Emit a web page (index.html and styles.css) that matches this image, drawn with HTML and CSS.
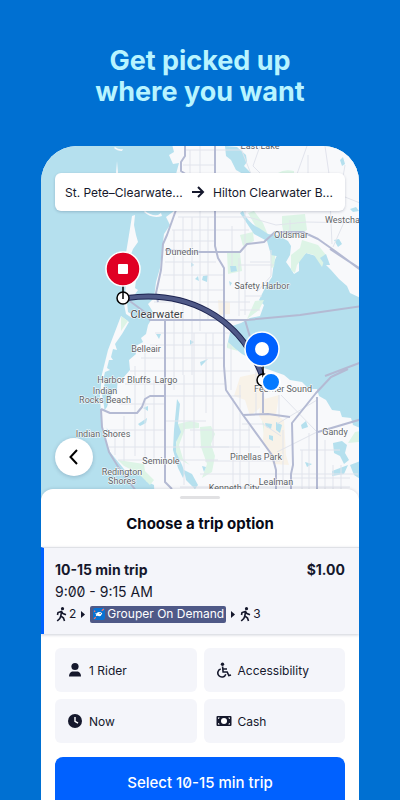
FILE: index.html
```html
<!DOCTYPE html>
<html lang="en">
<head>
    <meta charset="UTF-8">
    <meta name="viewport" content="width=device-width, initial-scale=1.0">
    <title>Choose a trip option</title>
    <link rel="stylesheet" href="styles.css">
</head>
<body>
    <h1 class="headline">Get picked up<br>where you want</h1>

    <main class="phone">
        <section class="map">
            <svg class="map-canvas" viewBox="41 146 318 354" preserveAspectRatio="xMidYMid slice">
                <rect class="water" x="0" y="100" width="420" height="420"/>

                <!-- Mainland -->
                <path class="land" d="M171 140 L174 152 L169 155 L173 164 L179 163 L176 174 L178 190 L174 211 L166 217 L170 225 L164 234 L162 250 L160 268 L156 282 L154 298 L148 304 L153 312 L151 320 L148 325 L146 334 L141 338 L143 342 L134 347 L136 354 L129 360 L130 370 L123 378 L118 377 L117 389 L110 397 L107 407 L104 411 L104 425 L110 432 L111 447 L117 460 L128 467 L137 468 L140 474 L148 475 L146 481 L154 485 L155 505 L365 505 L365 430 L353 425 L351 418 L342 417 L340 411 L332 410 L326 400 L319 396 L317 389 L309 389 L302 382 L290 380 L284 375 L270 370 L258 366 L250 358 L242 354 L237 350 L227 347 L229 337 L232 326 L241 323 L250 318 L260 316 L264 305 L259 300 L266 286 L272 277 L274 262 L278 253 L270 246 L270 240 L277 235 L288 241 L291 246 L290 255 L286 262 L291 269 L294 274 L299 271 L299 261 L306 253 L316 256 L323 262 L331 270 L339 279 L347 286 L350 293 L365 300 L365 140 Z"/>

                <!-- Barrier islands -->
                <path class="land" d="M115 147 q4 3 8 2 l-1 2 q-5 0 -8 -3z M117 161 l-1 12 1 14 1 -14z M145 211 q6 5 13 4 l3 -2 1 3 q-10 3 -18 -4z M132 216 l3 -1 -1 10 2 10 2 7 -5 7 -3 8 -7 6 3 -10 2 -12z M127 274 l7 0 2 6 -1 8 3 2 -7 10 -4 2 1 10 5 3 -1 3 -6 -4 -2 -10z M121 316 l8 6 -7 12 -7 10 2 6 -4 -1 -2 8 2 3 -4 0 -2 8 3 2 -5 2 -2 8 2 2 -3 12 2 12 3 24 8 18 15 20 -2 6 -18 -22 -8 -20 -2 -36 2 -22 6 -24z"/>
                <path class="park" d="M121 316 l7 5 -7 10z M278 173 q6 -4 16 -2 l0 4 -16 0z M248 213 l6 -2 9 12 5 12 10 6 -10 -1 -12 -13z M282 216 l23 -2 2 16 -13 8 -10 -3 -2 -10z M240 235 l13 -3 1 9 -11 5z M302 240 l16 5 8 10 -4 12 -8 -12 -8 -2 -9 12 -2 8 -4 -3 0 -15 9 -7z M270 246 l6 4 -2 17 -3 1z M227 253 l13 0 2 18 -14 3z M255 301 l9 -1 -5 10 -12 9z M228 342 l10 9 -11 -3z M178 424 l12 -3 9 2 0 5 -14 1 -6 16 4 14 7 6 -15 -8z M262 420 l16 -3 6 6 -1 13 -9 4 -10 -6z M355 432 l5 -1 0 11 -12 1z M118 460 l26 4 1 7 9 9 -4 5 -12 -12 -14 -7z M200 427 l11 -1 4 8 -4 10 4 12 -3 16 -10 6 5 -14 -6 -17z"/>
                <path class="sand" d="M218 300 l12 2 0 12 -11 1z M240 377 l18 -4 8 30 -16 13 -5 -16 -11 -4z M261 400 l18 -5 -3 20 8 5 2 35 3 10 -16 -1 -10 -24 1 -16 -5 -8z M168 310 l15 2 0 8 -15 0z"/>

                <!-- Lakes and inlets -->
                <path class="water" d="M225 146 l12 1 9 8 1 7 -3 4 8 8 -2 4 -14 -8 -5 -10 -5 -4z M243 211 q5 12 16 17 l9 6 12 2 9 8 -2 14 -16 -3 -4 -14 -13 -7 -14 -21z M230 266 l6 0 1 5 -6 1z M203 276 l5 -1 -1 7 -5 -2z M340 160 l3 -3 2 7 -3 2z M350 209 l6 -2 3 4 -6 1z M334 240 l5 -1 3 5 -4 3z M320 258 l6 -4 4 11 -5 0z M177 399 l3 5 -2 20 3 8 -5 10 0 10 6 13 3 8 -2 5 -5 -10 -5 -18 1 -20z M138 424 l9 -6 -1 5 -6 3z M143 408 l5 -2 0 5z M301 425 l5 -4 2 6 -6 2z M333 443 l9 -2 5 4 -2 8 4 7 -5 4 -4 -8 -6 -3z M350 465 l10 -4 0 18 -6 -4z M332 471 l16 -6 -4 9 -12 2z M305 462 l7 2 -5 3z M120 468 l10 8 6 0 3 8 9 8 -16 3z M184 470 l8 4 6 11 -3 4 -9 -9z M265 423 l7 1 -1 5 -5 -2z M276 422 l6 3 -2 8 -4 -3z M269 435 l4 1 0 5 -4 -2z M229 281 l3 2 -2 3z M191 262 l3 3 -3 2z M195 279 l3 -3 1 5z M156 334 l5 0 -2 5z M190 340 l4 2 -4 3z M200 362 l8 -3 -7 7z M202 466 l4 1 -2 5z M343 405 l5 6 -6 -2z"/>

                <!-- Streets -->
                <path class="street" d="M186 150 h55 M183 165 h32 M190 180 h60 M172 230 h77 M178 217 h70 M170 241 h46 M165 262 h51 M163 275 h60 M160 290 h64 M154 302 h96 M155 333 h75 M150 345 h74 M141 358 h83 M130 371 h120 M125 384 h100 M119 404 h46 M106 430 h59 M109 447 h120 M118 460 h100 M165 396 h76 M166 421 h40 M190 430 h60 M200 447 h60 M205 461 h75 M200 474 h158 M180 487 h170 M242 424 h22 M290 478 h60 M300 450 h40 M238 265 h36 M245 296 h17 M240 310 h20
                M190 150 v30 M200 146 v185 M208 217 v103 M192 217 v158 M183 217 v158 M174 230 v160 M206 333 v80 M213 333 v115 M194 333 v115 M184 375 v110 M245 175 v140 M232 226 v40 M239 258 v58 M154 380 v85 M145 345 v115 M135 366 v90 M124 416 v45 M115 430 v25 M231 345 v45 M233 398 v91 M240 385 v104 M249 425 v63 M256 365 v50 M283 430 v58 M302 450 v40 M309 433 v57 M325 440 v50 M333 465 v25 M341 465 v25 M279 395 v23
                M240 146 l11 28 M260 146 l-7 20 8 8 M308 155 v18 M325 146 l4 28 M345 165 l-5 30 20 8 M248 217 l28 8 30 -3 54 1 M307 146 l-10 28 M290 220 v15 M330 200 l2 44 M345 220 l-12 27 M277 424 l40 -24 M277 452 l40 -20 M281 395 l36 37 M263 424 l18 12 M271 250 v26 l-14 16 M250 262 h20"/>
                <path class="road" d="M185 140 L185 156 L181 162 L181 171 L187 175 M176 210 L167 235 L163 244 L161 270 L156 293 L158 302 M127 299 L146 313 L150 320 L247 320 L300 315 L362 306 M165 320 V482 L172 489 M215 146 V246 L218 258 L224 268 V366 L226 390 L243 415 L272 455 L276 470 V495 M165 250 L200 252 H240 L247 244 L264 242 L275 232 L303 232 L318 239 L335 251 L362 271 M330 249 L362 270 M101 409 L110 413 H137 L142 407 L145 399 L150 396 H165 M101 409 L102 427 L109 452 L122 473 L137 492 M243 415 L268 414 L290 417 M291 495 V474 L293 465 L292 423 L316 393 L331 377 L348 369 M317 397 V495 M318 432 L362 419 M245 320 l5 17 M263 380 v33 M325 376 L362 362"/>

                <!-- Place names -->
                <g class="places">
                    <text x="260" y="149">East Lake</text>
                    <text x="182" y="255">Dunedin</text>
                    <text x="291" y="238">Oldsmar</text>
                    <text x="325" y="223" class="start">Westchase</text>
                    <text x="262" y="289">Safety Harbor</text>
                    <text x="157" y="318" class="city">Clearwater</text>
                    <text x="146" y="352">Belleair</text>
                    <text x="124" y="383">Harbor Bluffs</text>
                    <text x="166" y="383">Largo</text>
                    <text x="105" y="394">Indian</text>
                    <text x="105" y="403">Rocks Beach</text>
                    <text x="103" y="437">Indian Shores</text>
                    <text x="161" y="464">Seminole</text>
                    <text x="122" y="475">Redington</text>
                    <text x="122" y="484">Shores</text>
                    <text x="283" y="392">Feather Sound</text>
                    <text x="335" y="435">Gandy</text>
                    <text x="256" y="460">Pinellas Park</text>
                    <text x="276" y="485">Lealman</text>
                    <text x="234" y="491">Kenneth City</text>
                </g>

                <!-- Route -->
                <path class="route-edge" d="M127 298 C185 290 240 315 263 378"/>
                <path class="route" d="M127 298 C185 290 240 315 263 378"/>
                <circle class="stop" cx="123" cy="298" r="6"/>
                <path class="stem" d="M123 284 V299"/>
                <circle class="pin pin-end" cx="123" cy="269" r="17"/>
                <rect x="118" y="264" width="10" height="10" rx="1" fill="#fff"/>
                <circle class="stop" cx="263" cy="380" r="6"/>
                <path class="stem" d="M263 364 V380"/>
                <circle class="pin pin-start" cx="262" cy="349" r="17"/>
                <circle cx="262" cy="349" r="7" fill="#fff"/>
                <circle class="me" cx="271" cy="382" r="9"/>
            </svg>

            <button class="search" type="button">
                <span>St. Pete–Clearwate...</span>
                <svg width="14" height="12" viewBox="0 0 14 12"><path d="M1 6H12M7 1L12 6L7 11" fill="none" stroke="#15182c" stroke-width="2"/></svg>
                <span>Hilton Clearwater B...</span>
            </button>

            <button class="back" type="button" aria-label="Back">
                <svg width="10" height="16" viewBox="0 0 10 16"><path d="M8 1L1.500 8L8 15" fill="none" stroke="#000" stroke-width="2"/></svg>
            </button>
        </section>

        <section class="sheet">
            <div class="handle"></div>
            <h2 class="sheet-title">Choose a trip option</h2>

            <button class="trip" type="button">
                <span class="trip-row">
                    <span>10-15 min trip</span>
                    <span>$1.00</span>
                </span>
                <span class="trip-time">9:00 - 9:15 AM</span>
                <span class="trip-legs">
                    <svg class="walk" width="11" height="15" viewBox="0 0 11 15"><circle cx="6.5" cy="1.7" r="1.6"/><path d="M5.500 5L4.800 9L7.500 11L8.500 14M4.800 9L3.800 11.500L1.200 14M1.500 8L2 5.600L5.500 4.500L7 6.600L10 7.800"/></svg>
                    <span>2</span>
                    <svg class="caret" width="4" height="7" viewBox="0 0 4 7"><path d="M0 0L4 3.500L0 7Z"/></svg>
                    <span class="badge">
                        <svg width="12" height="12" viewBox="0 0 11 11"><rect width="11" height="11" rx="2" fill="#0872d3"/><path d="M1.500 5L3 5Q6 2.500 8.500 5Q7 8.500 4 7L2.500 7.500L3 6Z" fill="#fff"/><circle cx="6.500" cy="5" r="0.600" fill="#173f78"/><path d="M8 2.500L10 1M1 10L2.500 8.500M1 2.500L2 3.500" stroke="#ff735f" stroke-width="1.200"/></svg>
                        Grouper On Demand
                    </span>
                    <svg class="caret" width="4" height="7" viewBox="0 0 4 7"><path d="M0 0L4 3.500L0 7Z"/></svg>
                    <svg class="walk" width="11" height="15" viewBox="0 0 11 15"><circle cx="6.5" cy="1.7" r="1.6"/><path d="M5.500 5L4.800 9L7.500 11L8.500 14M4.800 9L3.800 11.500L1.200 14M1.500 8L2 5.600L5.500 4.500L7 6.600L10 7.800"/></svg>
                    <span>3</span>
                </span>
            </button>

            <div class="options">
                <button class="option" type="button">
                    <svg width="16" height="16" viewBox="0 0 16 16"><circle cx="8" cy="4.5" r="3.6"/><path d="M2 14.6C2 11 4 9.400 6 9.400H10C12 9.400 14 11 14 14.600Z"/></svg>
                    1 Rider
                </button>
                <button class="option" type="button">
                    <svg width="16" height="16" viewBox="0 0 16 16"><circle cx="6.5" cy="2.3" r="1.7"/><path d="M6.600 4.500L7.100 10H11.200L12.800 13.600L15 12.900M6.800 7H11M4.700 7A4.100 4.100 0 1 0 9.800 12.200" fill="none" stroke="#15182c" stroke-width="1.6"/></svg>
                    Accessibility
                </button>
                <button class="option" type="button">
                    <svg width="16" height="16" viewBox="0 0 16 16"><circle cx="8" cy="8" r="7"/><path d="M8 4V8.300L11 10.200" fill="none" stroke="#fff" stroke-width="1.4"/></svg>
                    Now
                </button>
                <button class="option" type="button">
                    <svg width="16" height="16" viewBox="0 0 16 16"><rect x="0.5" y="3" width="15" height="10" rx="1"/><circle cx="8" cy="8" r="3" fill="#fff"/><path d="M2 6V4.500H3.700Q3.500 5.800 2 6ZM14 6V4.500H12.300Q12.500 5.800 14 6ZM2 10V11.500H3.700Q3.500 10.200 2 10ZM14 10V11.500H12.300Q12.500 10.200 14 10Z" fill="#fff"/></svg>
                    Cash
                </button>
            </div>

            <button class="select" type="button">Select 10-15 min trip</button>
        </section>
    </main>
</body>
</html>
```
FILE: styles.css
```css
* {
    box-sizing: border-box;
}

body {
    margin: 0;
    height: 100vh;
    overflow: hidden;
    background-color: #0070d2;
    color: #15182c;
    font-family: Inter, sans-serif;
}

button {
    border: none;
    font: inherit;
    color: inherit;
    cursor: pointer;
}

svg {
    flex-shrink: 0;
}

.headline {
    margin: 0;
    padding: 45px 0 39px;
    text-align: center;
    font-size: 27px;
    line-height: 31px;
    font-weight: 700;
    color: #b8f4ff;
}

.phone {
    margin: 0 41px;
    border-radius: 36px 36px 0 0;
    overflow: hidden;
    background-color: #fff;
}

/* Map */
.map {
    position: relative;
    display: flex;
    flex-direction: column;
    justify-content: space-between;
    align-items: flex-start;
    height: 354px;
    padding: 27px 14px 24px;
}

.map-canvas {
    position: absolute;
    inset: 0;
    width: 100%;
    height: 100%;
}

.water {
    fill: #b5e0ee;
}

.land {
    fill: #f8f9fb;
}

.park {
    fill: #ddf4e6;
}

.sand {
    fill: #f8f2e8;
}

.street {
    fill: none;
    stroke: #e1e4ec;
    stroke-width: 1;
}

.road {
    fill: none;
    stroke: #b4bad3;
    stroke-width: 2;
    stroke-linejoin: round;
}

.places {
    font-family: Roboto, sans-serif;
    font-size: 9px;
    text-anchor: middle;
    fill: #5c5f66;
    stroke: #fff;
    stroke-width: 1;
    paint-order: stroke;
}

.places .start {
    text-anchor: start;
}

.places .city {
    font-size: 11px;
    fill: #3b3e45;
}

.route-edge {
    fill: none;
    stroke: #1c2350;
    stroke-width: 6;
}

.route {
    fill: none;
    stroke: #4f5987;
    stroke-width: 4;
}

.stop {
    fill: #fff;
    stroke: #000;
    stroke-width: 1.5;
}

.stem {
    stroke: #000;
    stroke-width: 1.5;
}

.pin {
    stroke: #fff;
    stroke-width: 1.5;
}

.pin-end {
    fill: #e00024;
}

.pin-start {
    fill: #0061ff;
}

.me {
    fill: #057aff;
    stroke: #fff;
    stroke-width: 2;
}

.search {
    position: relative;
    display: flex;
    justify-content: space-between;
    align-items: center;
    width: 100%;
    height: 38px;
    padding: 0 12px 0 10px;
    border-radius: 6px;
    background-color: #fff;
    box-shadow: 0 1px 3px rgba(0, 20, 60, 0.2);
    font-size: 12px;
    white-space: nowrap;
}

.back {
    position: relative;
    display: flex;
    justify-content: center;
    align-items: center;
    width: 38px;
    height: 38px;
    padding: 0;
    border-radius: 50%;
    background-color: #fff;
    box-shadow: 0 1px 4px rgba(0, 20, 60, 0.2);
}

/* Bottom sheet */
.sheet {
    position: relative;
    margin-top: -11px;
    padding-top: 7px;
    border-radius: 12px 12px 0 0;
    background-color: #fff;
    box-shadow: 0 -1px 3px rgba(0, 20, 60, 0.1);
}

.handle {
    width: 40px;
    height: 3px;
    margin: 0 auto;
    border-radius: 2px;
    background-color: #e1e1e3;
}

.sheet-title {
    margin: 0;
    padding: 15px 0 13px;
    text-align: center;
    font-size: 15px;
    line-height: 20px;
    font-weight: 700;
    color: #080a18;
}

.trip {
    display: flex;
    flex-direction: column;
    gap: 2px;
    width: 100%;
    padding: 12px 14px 10px 11px;
    border-top: 1px solid #dfe1e6;
    border-left: 3px solid #0061ff;
    background-color: #f4f5fa;
    box-shadow: 0 1px 3px rgba(0, 20, 60, 0.2);
    text-align: left;
    font-size: 14px;
    line-height: 20px;
}

.trip-row {
    display: flex;
    justify-content: space-between;
    width: 100%;
    font-weight: 700;
}

.trip-time {
    font-feature-settings: "zero";
}

.trip-legs {
    display: flex;
    align-items: center;
    gap: 4px;
    padding-left: 1px;
    font-size: 12px;
}

.walk {
    fill: none;
    stroke: #15182c;
    stroke-width: 1.6;
}

.walk circle {
    fill: #15182c;
    stroke: none;
}

.walk + span {
    margin-left: -2px;
}

.caret {
    margin: 0 1px;
    fill: #15182c;
}

.badge {
    display: flex;
    align-items: center;
    gap: 2px;
    height: 17px;
    padding: 0 2px 0 3px;
    border-radius: 2px;
    background-color: #4f5987;
    color: #fff;
}

.options {
    display: grid;
    grid-template-columns: 1fr 1fr;
    gap: 7px;
    padding: 14px;
}

.option {
    display: flex;
    align-items: center;
    gap: 6px;
    height: 44px;
    padding: 0 12px;
    border-radius: 6px;
    background-color: #f4f5fa;
    font-size: 12px;
    fill: #15182c;
}

.select {
    display: block;
    width: calc(100% - 28px);
    height: 50px;
    margin: 0 14px 14px;
    border-radius: 8px;
    background-color: #0061ff;
    color: #fff;
    font-size: 15px;
    font-weight: 500;
    font-feature-settings: "zero";
}
```
